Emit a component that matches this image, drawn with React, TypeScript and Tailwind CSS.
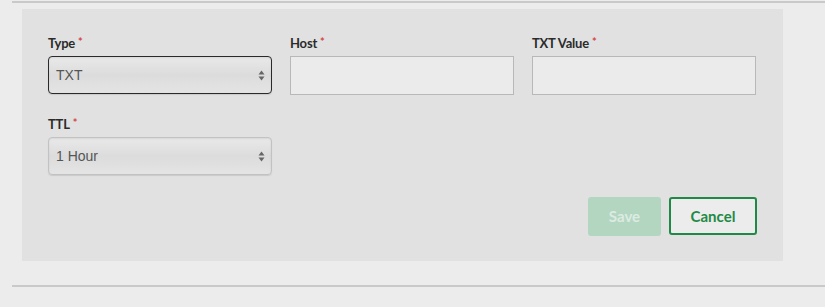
import React from 'react';

const Arrows = () => (
  <svg width="7" height="11" viewBox="0 0 7 11" className="shrink-0">
    <path d="M3.5 0.5 L6.5 4.5 L0.5 4.5 Z" fill="#666" />
    <path d="M3.5 10.5 L6.5 6.5 L0.5 6.5 Z" fill="#666" />
  </svg>
);

const Label = ({ text }: { text: string }) => (
  <div className="mb-[6px] flex items-start text-[13px] font-bold leading-[14px] text-[#2b2b2b] tracking-[-0.2px]">
    {text}
    <span className="ml-[3px] text-[#d64545] text-[11px] leading-[12px]">*</span>
  </div>
);

const SelectBox = ({ value, focused }: { value: string; focused?: boolean }) => (
  <div
    className={`h-[38px] w-[224px] rounded-[4px] border flex items-center justify-between pl-[7px] pr-[6px] bg-gradient-to-b from-[#e9e9e9] via-[#dcdcdc] to-[#e4e4e4] shadow-[inset_0_1px_2px_rgba(0,0,0,0.08),0_1px_1px_rgba(0,0,0,0.1)] ${
      focused ? 'border-[#2a2a2a]' : 'border-[#c2c2c2]'
    }`}
    style={{ fontFamily: '"Liberation Sans", Arial, sans-serif' }}
  >
    <span className="text-[14px] text-[#555]">{value}</span>
    <Arrows />
  </div>
);

const TextInput = () => (
  <div className="h-[39px] w-[224px] border border-[#b8b8b8] bg-[#ebebeb]" />
);

export default function App() {
  return (
    <div
      className="w-[825px] h-[307px] bg-[#ececec] overflow-hidden"
      style={{ fontFamily: 'Lato, "Open Sans", sans-serif' }}
    >
      <div className="ml-[12px] h-[2px] bg-[#c9c9c9] mt-[1px]" />
      <div className="ml-[22px] mt-[6px] w-[761px] h-[252px] bg-[#e1e1e1] pl-[26px] pt-[27px]">
        <div className="flex gap-[18px]">
          <div>
            <Label text="Type" />
            <SelectBox value="TXT" focused />
          </div>
          <div>
            <Label text="Host" />
            <TextInput />
          </div>
          <div>
            <Label text="TXT Value" />
            <TextInput />
          </div>
        </div>
        <div className="mt-[22px]">
          <Label text="TTL" />
          <SelectBox value="1 Hour" />
        </div>
        <div className="mt-[22px] flex justify-end gap-[8px] pr-[26px]">
          <button className="h-[39px] w-[73px] rounded-[3px] bg-[#b3d6c1] text-[15px] font-bold text-[#dcebe2]">
            Save
          </button>
          <button className="h-[38px] w-[88px] rounded-[3px] border-2 border-[#1e8a45] bg-[#ececec] text-[15px] font-bold text-[#1e8a45]">
            Cancel
          </button>
        </div>
      </div>
      <div className="ml-[12px] mt-[24px] h-[2px] bg-[#c9c9c9]" />
    </div>
  );
}
